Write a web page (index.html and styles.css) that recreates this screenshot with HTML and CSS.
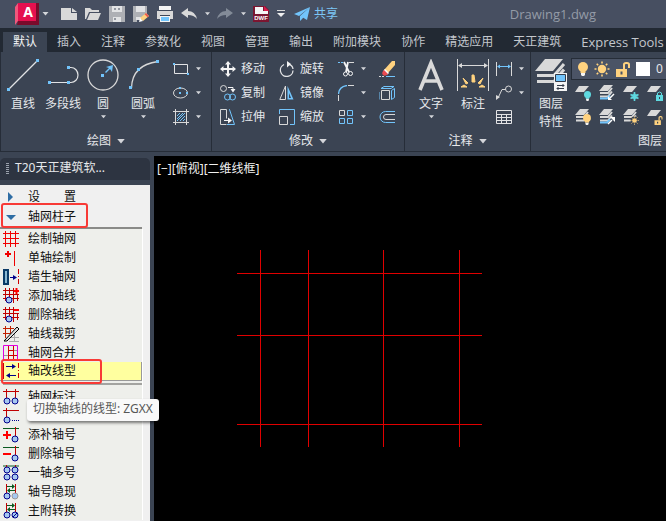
FILE: index.html
```
<!DOCTYPE html>
<html lang="zh-CN">
<head>
    <meta charset="UTF-8">
    <meta name="viewport" content="width=device-width, initial-scale=1.0">
    <title>Drawing1.dwg</title>
    <link rel="stylesheet" href="styles.css">
</head>
<body>
    <!-- shared symbols -->
    <svg class="defs" width="0" height="0" aria-hidden="true">
        <symbol id="caret" viewBox="0 0 6 4"><path d="M0 0h6L3 3.6z" fill="#d4d6da"/></symbol>
        <symbol id="sheet" viewBox="0 0 16 16"><path d="M4 2h10L9 8H0z" fill="#d9d9d9"/></symbol>
        <symbol id="stack" viewBox="0 0 16 16">
            <path d="M5 0h9L9 6H0z" fill="#d9d9d9"/>
            <path d="M1 8h8l4-5M1 11.5h8l4-5" fill="none" stroke="#d9d9d9" stroke-width="2"/>
        </symbol>
        <symbol id="bulb" viewBox="0 0 10 14">
            <circle cx="5" cy="5" r="5"/><path d="M2.5 8h5v3h-5z"/><path d="M3 11h4v2L6 14H4l-1-1z" fill="#f4f4f4"/>
        </symbol>
        <symbol id="sun" viewBox="0 0 16 16">
            <circle cx="8" cy="8" r="4.2"/>
            <path d="M8 .5v2M8 13.5v2M.5 8h2M13.5 8h2M2.7 2.7l1.5 1.5M11.8 11.8l1.5 1.5M2.7 13.3l1.5-1.5M11.8 4.2l1.5-1.5" stroke="#ffd27f" stroke-width="1.6"/>
        </symbol>
        <symbol id="unlock" viewBox="0 0 14 15">
            <path d="M0 7h11v8H0zM4.500 9.500v3h2v-3z" fill-rule="evenodd"/>
            <path d="M8 7V2.500Q8 1 10 1h1q2 0 2 1.500V6" fill="none" stroke="#ffd27f" stroke-width="2"/>
        </symbol>
        <symbol id="node" viewBox="0 0 8 8"><circle cx="4" cy="4" r="3" fill="#a6c8f0" stroke="#00008b"/></symbol>
    </svg>

    <header class="titlebar">
        <button class="app-button" aria-label="应用程序菜单">
            <svg width="24" height="22" viewBox="0 0 24 22">
                <path d="M0 4l3-4v18l-3 4z" fill="#f0587c"/><path d="M3 0h18v18H3z" fill="#e5104f"/>
                <path d="M21 0h3v22H2l1-4h18z" fill="#7a0b2b"/>
                <text class="logo-letter" x="13" y="14" text-anchor="middle">A</text>
            </svg>
            <svg width="7" height="4"><use href="#caret"/></svg>
        </button>
        <div class="quick-access">
            <button aria-label="新建"><svg width="16" height="16"><path d="M0 2h10v5h6v7H0z" fill="#d9d9d9"/><path d="M11 2l5 4h-5z" fill="#d9d9d9"/></svg></button>
            <button aria-label="打开"><svg width="16" height="16"><path d="M0 2h5l2 2h7v2H4L1 13H0z" fill="#d9d9d9"/><path d="M5 7h11l-3 7H2z" fill="#d9d9d9"/></svg></button>
            <button aria-label="保存"><svg width="16" height="16"><path d="M0 0h3v6h10V0h3v16h-4v-5H4v5H0z" fill="#aeb0b5"/><path d="M3 0h10v6H3zM4 11h8v5H4z" fill="#e2e3e5"/><path d="M6 2v2M10 2v2M6 12v2" stroke="#444c5c"/></svg></button>
            <button aria-label="另存为"><svg width="16" height="16"><path d="M0 0h3v6h9V0h2v8l-6 6H4v2H0z" fill="#aeb0b5"/><path d="M3 0h9v6H3zM3 11h5v3H3z" fill="#e2e3e5"/><path d="M7 12l6-5 3 3-6 5z" fill="#ffd27f"/><path d="M13 7l3 3-1.500 1.200-3-3z" fill="#ec5b50"/><path d="M7 12l3 3-4 1z" fill="#fff"/></svg></button>
            <button aria-label="打印"><svg width="16" height="16"><path d="M2 0h12v5H2z" fill="#f4f4f4"/><path d="M0 5h16v8h-3v-4H3v4H0z" fill="#d9d9d9"/><path d="M3 9h10v7H3z" fill="#f4f4f4"/><path d="M4 11h8v4H4z" fill="#72c4fb"/><path d="M2 4.500h12M3 9.500h10" stroke="#3f4859"/></svg></button>
            <button aria-label="放弃"><svg width="16" height="16"><path d="M0 7l7-5v3q7 0 9 8-3-4-9-4v3z" fill="#d9d9d9"/></svg></button>
            <button class="drop" aria-label="放弃列表"><svg width="5" height="4"><use href="#caret"/></svg></button>
            <button aria-label="重做"><svg width="16" height="16"><path d="M16 7L9 2v3Q2 5 0 13q3-4 9-4v3z" fill="#838b98"/></svg></button>
            <button class="drop" aria-label="重做列表"><svg width="5" height="4"><use href="#caret"/></svg></button>
            <button aria-label="DWF"><svg width="16" height="16"><path d="M0 0h12l4 4v12H0z" fill="#7b1631"/><path d="M2 1h8v4h5v3H2z" fill="#f5f5f5"/><path d="M11 0l5 5h-5z" fill="#d81b4c"/><text class="dwf-letters" x="8" y="14" text-anchor="middle">DWF</text></svg></button>
            <button class="more" aria-label="自定义"><svg width="8" height="8"><path d="M0 .5h8" stroke="#d9d9d9"/><path d="M0 3h8L4 7z" fill="#f0f0f0"/></svg></button>
        </div>
        <button class="share">
            <svg width="16" height="14"><path d="M16 0L0 7l5 2zM16 0L6 9v5l3-3z" fill="#72c4fb"/><path d="M16 0L8 10l5 3z" fill="#72c4fb"/></svg>
            共享
        </button>
        <span class="doc-title">Drawing1.dwg</span>
    </header>

    <nav class="tabs">
        <button class="tab active">默认</button>
        <button class="tab">插入</button>
        <button class="tab">注释</button>
        <button class="tab">参数化</button>
        <button class="tab">视图</button>
        <button class="tab">管理</button>
        <button class="tab">输出</button>
        <button class="tab">附加模块</button>
        <button class="tab">协作</button>
        <button class="tab">精选应用</button>
        <button class="tab">天正建筑</button>
        <button class="tab latin">Express Tools</button>
    </nav>

    <div class="ribbon">
        <section class="panel">
            <div class="panel-body draw-tools">
                <button class="big">
                    <svg width="32" height="32"><path d="M2 30L30 2" stroke="#e2e3e5" stroke-width="1.2"/><path d="M0 29h3v3H0zM29 0h3v3h-3z" fill="#72c4fb"/></svg>
                    直线
                </button>
                <button class="big">
                    <svg width="32" height="32"><path d="M3 23.500h18M22 8.500h2c4 0 7 3.500 7 7.500s-3 7.500-7 7.500h-2" fill="none" stroke="#e2e3e5" stroke-width="1.2"/><path d="M1 22h3v3H1zM20 22h3v3h-3zM20 7h3v3h-3z" fill="#72c4fb"/></svg>
                    多段线
                </button>
                <button class="big">
                    <svg width="32" height="32"><circle cx="16" cy="16" r="15" fill="none" stroke="#d9d9d9" stroke-width="1.3"/><path d="M14 15h3v3h-3zM18 13l4-4-3-1 7-2-1 7-2-3-4 4z" fill="#72c4fb"/></svg>
                    圆
                    <svg class="down" width="5" height="4"><use href="#caret"/></svg>
                </button>
                <button class="big">
                    <svg width="32" height="32"><path d="M4.500 29Q5 6 31 2.500" fill="none" stroke="#d9d9d9" stroke-width="1.3"/><path d="M2 27h3v3H2zM10 9h3v3h-3zM29 1h3v3h-3z" fill="#72c4fb"/></svg>
                    圆弧
                    <svg class="down" width="5" height="4"><use href="#caret"/></svg>
                </button>
                <div class="small-stack">
                    <button class="small" aria-label="矩形"><svg width="16" height="16"><path d="M1.500 3.500h13v9h-13z" fill="none" stroke="#e2e3e5"/><path d="M0 2h2v2H0zM14 12h2v2h-2z" fill="#72c4fb"/></svg><svg width="5" height="4"><use href="#caret"/></svg></button>
                    <button class="small" aria-label="椭圆"><svg width="16" height="16"><ellipse cx="7.500" cy="8" rx="7" ry="5" fill="none" stroke="#d9d9d9"/><path d="M6 2h2v2H6zM6 7h2v2H6zM13 7h2v2h-2z" fill="#72c4fb"/></svg><svg width="5" height="4"><use href="#caret"/></svg></button>
                    <button class="small" aria-label="图案填充"><svg width="16" height="16"><path d="M0 2.500h16M0 13.500h16M2.500 0v16M13.500 0v16" stroke="#d9d9d9"/><path d="M4 7l3-3M4 10l6-6M4 12l8-8M7 12l5-5M10 12l2-2" stroke="#72c4fb"/></svg><svg width="5" height="4"><use href="#caret"/></svg></button>
                </div>
            </div>
            <button class="panel-title">绘图<svg width="8" height="5"><use href="#caret"/></svg></button>
        </section>

        <section class="panel">
            <div class="panel-body modify-tools">
                <button class="tool"><svg width="16" height="16"><path d="M8 1v14M1 8h14" stroke="#f4f4f4" stroke-width="2"/><path d="M8 0l3 3.500H5zM8 16l3-3.500H5zM0 8l3.500-3v6zM16 8l-3.500-3v6z" fill="#f4f4f4"/></svg>移动</button>
                <button class="tool"><svg width="16" height="16"><path d="M5 3.500a6.300 6.300 0 1 0 9 6M14 8q-.5-4-5-5" fill="none" stroke="#e2e3e5" stroke-width="1.3"/><path d="M8 0l4 3-4 3.500z" fill="#f4f4f4"/></svg>旋转</button>
                <button class="small" aria-label="修剪"><svg width="16" height="16"><path d="M0 1.500h6" stroke="#72c4fb" stroke-dasharray="2 1"/><path d="M11 1.500h5" stroke="#d9d9d9"/><path d="M6 1l5 10M10 1L8 11" stroke="#f4f4f4" stroke-width="1.8"/><circle cx="7.500" cy="13" r="2" fill="none" stroke="#f4f4f4"/><circle cx="12.500" cy="12.500" r="2" fill="none" stroke="#f4f4f4"/></svg><svg width="5" height="4"><use href="#caret"/></svg></button>
                <button class="small" aria-label="删除"><svg width="16" height="16"><path d="M0 15.500h6" stroke="#d9d9d9" stroke-dasharray="2 1"/><path d="M7 15.500h9" stroke="#72c4fb"/><path d="M5 9L13 0h3v4L9 12z" fill="#ffd27f"/><path d="M6 8l4 4-1.500 1.500-4-4z" fill="#fff"/><path d="M5 9l4 4q-3 3-5 1t1-5z" fill="#ec4b50"/></svg></button>

                <button class="tool"><svg width="16" height="16"><circle cx="3.500" cy="3.500" r="3" fill="none" stroke="#d9d9d9"/><path d="M8 2.500h5V5" fill="none" stroke="#f4f4f4"/><path d="M10.500 4h5L13 7.500z" fill="#f4f4f4"/><circle cx="7.500" cy="12" r="3" fill="none" stroke="#72c4fb"/><circle cx="12.500" cy="12" r="3" fill="none" stroke="#72c4fb"/></svg>复制</button>
                <button class="tool"><svg width="16" height="16"><path d="M6.500 1v13.500H.8z" fill="none" stroke="#d9d9d9"/><path d="M8.500 1v13.500h6z" fill="#72c4fb"/><path d="M10 8v5h2z" fill="#3b4453"/></svg>镜像</button>
                <button class="small" aria-label="圆角"><svg width="16" height="16"><path d="M.5 9Q1 1.500 9 .5" fill="none" stroke="#72c4fb" stroke-width="1.3"/><path d="M10 .5h6M.5 10v6" stroke="#d9d9d9"/></svg><svg width="5" height="4"><use href="#caret"/></svg></button>
                <button class="small" aria-label="分解"><svg width="16" height="16"><path d="M2.500 5.500h8v9h-8z" fill="none" stroke="#d9d9d9"/><path d="M0 14.500V7M2 3.500L5 1.500h10L12 3.500zM12.500 5.500l3-2v9l-3 2z" fill="none" stroke="#72c4fb"/></svg></button>

                <button class="tool"><svg width="16" height="16"><path d="M6.500 15.500h-6V.5h6v9" fill="none" stroke="#d9d9d9"/><path d="M9.500.5l5 15H7M9.500.5H9" fill="none" stroke="#72c4fb"/><path d="M4 11.500h5" stroke="#f4f4f4"/><path d="M8 8.500l4 3-4 3z" fill="#f4f4f4"/></svg>拉伸</button>
                <button class="tool"><svg width="16" height="16"><path d="M.5 5V.5h15v15H11" fill="none" stroke="#72c4fb"/><path d="M.5 7.500h8v8h-8z" fill="none" stroke="#d9d9d9"/></svg>缩放</button>
                <button class="small" aria-label="阵列"><svg width="16" height="16"><path d="M1.500 1.500h5v5h-5z" fill="none" stroke="#d9d9d9"/><path d="M9.500 1.500h5v5h-5zM1.500 9.500h5v5h-5zM9.500 9.500h5v5h-5z" fill="none" stroke="#72c4fb"/></svg><svg width="5" height="4"><use href="#caret"/></svg></button>
                <button class="small" aria-label="偏移"><svg width="16" height="16"><path d="M16 2.500H6.500a5.500 5.500 0 0 0 0 11H16" fill="none" stroke="#72c4fb"/><path d="M16 5.500H7a2.500 2.500 0 0 0 0 5h9" fill="none" stroke="#d9d9d9"/></svg></button>
            </div>
            <button class="panel-title">修改<svg width="8" height="5"><use href="#caret"/></svg></button>
        </section>

        <section class="panel">
            <div class="panel-body note-tools">
                <button class="big">
                    <svg width="32" height="32"><path d="M5 31L16 4l11 27M9 22h14" fill="none" stroke="#d9d9d9" stroke-width="3.6"/></svg>
                    文字
                    <svg class="down" width="5" height="4"><use href="#caret"/></svg>
                </button>
                <button class="big">
                    <svg width="32" height="32"><path d="M.5 0v32M31.500 0v32M3 6.500h26" stroke="#d9d9d9"/><path d="M1 6.500L5 4v5zM31 6.500L27 4v5z" fill="#d9d9d9"/><path d="M4 28l6 0-3-2zM6 19l5 5-2 1zM15 16h2l1 7h-3zM26 19l-5 5 2 1zM28 28h-6l3-2z" fill="#ffd27f" stroke="#ffd27f"/></svg>
                    标注
                </button>
                <div class="small-stack">
                    <button class="small" aria-label="线性"><svg width="16" height="16"><path d="M.5 1v14M15.500 1v14" stroke="#d9d9d9"/><path d="M2 5.500h12" stroke="#72c4fb"/><path d="M1 5.500L4 3.500v4zM15 5.500l-3-2v4z" fill="#72c4fb"/></svg><svg width="5" height="4"><use href="#caret"/></svg></button>
                    <button class="small" aria-label="引线"><svg width="16" height="16"><circle cx="12.500" cy="4" r="3" fill="none" stroke="#d9d9d9"/><path d="M9.500 4.500H6L2 13" fill="none" stroke="#d9d9d9"/><path d="M0 15V10l4 2z" fill="#d9d9d9"/></svg><svg width="5" height="4"><use href="#caret"/></svg></button>
                    <button class="small" aria-label="表格"><svg width="16" height="16"><path d="M.5 1.500h15v13H.5zM0 5.500h16M0 8.500h16M0 11.500h16M5.500 5v10M10.500 5v10" fill="none" stroke="#e2e3e5"/></svg></button>
                </div>
            </div>
            <button class="panel-title">注释<svg width="8" height="5"><use href="#caret"/></svg></button>
        </section>

        <section class="panel layers">
            <div class="panel-body layer-tools">
                <button class="big">
                    <svg width="32" height="32"><path d="M10 0h18L18 12H0z" fill="#d9d9d9"/><path d="M2 16.500h17L29 5M2 22.500h17l10-12" fill="none" stroke="#d9d9d9" stroke-width="3"/><path d="M19 14h13v18H19z" fill="#f4f4f4"/><path d="M20.500 15.500h10v7h-10z" fill="#72c4fb" stroke="#333b49"/><path d="M22 26.500h7M22 29.500h7M23.500 28L22 29.500l1.500 1.500M27.500 25l1.500 1.500-1.500 1.500" fill="none" stroke="#333b49"/></svg>
                    <span>图层<br>特性</span>
                </button>
                <div class="layer-side">
                    <button class="layer-combo">
                        <svg width="10" height="14" fill="#ffd27f"><use href="#bulb"/></svg>
                        <svg width="16" height="16" fill="#ffd27f"><use href="#sun"/></svg>
                        <svg width="14" height="15" fill="#ffd27f"><use href="#unlock"/></svg>
                        <i class="swatch"></i>
                        0
                    </button>
                    <div class="layer-grid">
                        <button class="small" aria-label="关闭"><svg width="16" height="16"><use href="#sheet" y="-1"/><svg x="9" y="6" width="7" height="10" viewBox="0 0 10 14" fill="#5fd9e0"><use href="#bulb" width="10" height="14"/></svg></svg></button>
                        <button class="small" aria-label="匹配"><svg width="16" height="16"><use href="#stack"/><path d="M1 13.500h7l3-3" fill="none" stroke="#72c4fb" stroke-width="2"/><path d="M15 9l-4 4" stroke="#fff" stroke-width="1.5"/><path d="M9 15v-4l4 4z" fill="#fff"/></svg></button>
                        <button class="small" aria-label="冻结"><svg width="16" height="16"><use href="#sheet" y="-1"/><path d="M11.500 7v9M7.500 9.500l8 4M15.500 9.500l-8 4" stroke="#5fd9e0" stroke-width="1.6"/><circle cx="11.500" cy="11.500" r="2.500" fill="none" stroke="#5fd9e0"/></svg></button>
                        <button class="small" aria-label="锁定"><svg width="16" height="16"><use href="#sheet" y="-1"/><path d="M9 10h7v6H9z" fill="#5fd9e0"/><path d="M10.500 10V8q2-2 4 0v2" fill="none" stroke="#5fd9e0"/><path d="M12 12h1v2h-1z" fill="#3b4453"/></svg></button>
                        <button class="small" aria-label="全部打开"><svg width="16" height="16"><use href="#stack"/><svg x="8" y="5" width="8" height="11" viewBox="0 0 10 14" fill="#ffd27f"><use href="#bulb" width="10" height="14"/></svg></svg></button>
                        <button class="small" aria-label="置为当前"><svg width="16" height="16"><use href="#stack"/><path d="M1 13.500h7l3-3" fill="none" stroke="#72c4fb" stroke-width="2"/><path d="M9 15l4-4" stroke="#fff" stroke-width="1.5"/><path d="M16 8v5l-5-5z" fill="#fff"/></svg></button>
                        <button class="small" aria-label="解冻"><svg width="16" height="16"><use href="#stack"/><circle cx="11.500" cy="11.500" r="4" fill="#3b4453"/><svg x="7" y="7" width="9" height="9" viewBox="0 0 16 16" fill="#ffd27f"><use href="#sun" width="16" height="16"/></svg></svg></button>
                        <button class="small" aria-label="解锁"><svg width="16" height="16"><use href="#sheet" y="-1"/><svg x="7" y="7" width="9" height="9" viewBox="0 0 14 15" fill="#ffd27f"><use href="#unlock" width="14" height="15"/></svg></svg></button>
                    </div>
                </div>
            </div>
            <button class="panel-title">图层</button>
        </section>
    </div>

    <main class="workspace">
        <aside class="palette">
            <h1 class="palette-title"><i class="grip"></i>T20天正建筑软...</h1>
            <div class="menu">
                <button class="group"><svg width="16" height="16"><path d="M5 3l5 5-5 5z" fill="#2e6da4"/></svg>设　　置</button>
                <button class="group open marked"><svg width="16" height="16"><path d="M3 6h10l-5 5z" fill="#2e6da4"/></svg>轴网柱子</button>
                <div class="items">
                    <button class="item"><svg width="16" height="16"><path d="M0 2.500h16M0 7.500h16M0 12.500h16M2.500 0v16M7.500 0v16M12.500 0v16" stroke="#f00000"/></svg>绘制轴网</button>
                    <button class="item"><svg width="16" height="16"><path d="M2 4h6M5 1v6" stroke="#f00000" stroke-width="2"/><path d="M11.500 1v15" stroke="#f00000"/></svg>单轴绘制</button>
                    <button class="item"><svg width="16" height="16"><path d="M1 1h4v14H1z" fill="#8ab8d0" stroke="#0a3a66" stroke-width="2"/><path d="M7 8.500h5" stroke="#00008b"/><path d="M10 6l4 2.500-4 2.500z" fill="#00008b"/><path d="M15.500 0v16" stroke="#c00" stroke-dasharray="5 2 1 2"/></svg>墙生轴网</button>
                    <button class="item"><svg width="16" height="16"><path d="M0 2.500h11M0 6.500h16M0 10.500h16M2.500 0v13M6.500 0v11M10.500 0v15M14.500 6v7" stroke="#c00000"/><path d="M11 3h5M13.500 0v6" stroke="#f00" stroke-width="2"/><use href="#node" x="2" y="8" width="8" height="8"/></svg>添加轴线</button>
                    <button class="item"><svg width="16" height="16"><path d="M0 2.500h10M0 6.500h16M0 10.500h16M2.500 0v13M6.500 0v11M10.500 0v15M14.500 6v7" stroke="#c00000"/><path d="M11 3h5" stroke="#f00" stroke-width="2"/><use href="#node" x="2" y="8" width="8" height="8"/></svg>删除轴线</button>
                    <button class="item"><svg width="16" height="16"><path d="M0 2.500h11M0 7.500h8M2.500 0v12M7.500 0v8" stroke="#c02000"/><path d="M8 11.500h8M11.500 7v9M6 15.500h10" stroke="#aaa"/><path d="M1 15L14 1l2 2L4 15z" fill="#ddd" stroke="#000"/></svg>轴线裁剪</button>
                    <button class="item"><svg width="16" height="16"><path d="M5 5.500h10M5 10.500h10M5.500 1v14M10.500 1v14" stroke="#d00000"/><path d="M11 5.500h3M1 10.500h4" stroke="#999"/><path d="M.5.500h14v15H.5z" fill="none" stroke="#e000e0"/></svg>轴网合并</button>
                    <button class="item current marked"><svg width="16" height="16"><path d="M.5 0v16" stroke="#c00"/><path d="M15.500 0v16" stroke="#c00" stroke-dasharray="5 2 1 2"/><path d="M3 3.500h7M6 12.500h7" stroke="#00008b"/><path d="M9 1l4 2.500L9 6zM7 10l-4 2.500L7 15z" fill="#00008b"/></svg>轴改线型</button>
                    <hr>
                    <button class="item"><svg width="16" height="16"><path d="M0 2.500h16M3.500 0v10M12.500 0v10" stroke="#c00000"/><use href="#node" x="0" y="8" width="8" height="8"/><use href="#node" x="8" y="8" width="8" height="8"/></svg>轴网标注</button>
                    <button class="item" aria-label="单轴标注"><svg width="16" height="16"><path d="M0 2.500h16M3.500 0v10" stroke="#c00000"/><path d="M9 12.500h7" stroke="#00008b" stroke-dasharray="1 1"/><use href="#node" x="0" y="8" width="8" height="8"/></svg></button>
                    <button class="item"><svg width="16" height="16"><path d="M0 1.500h16" stroke="#0a5a20"/><path d="M12.500 0v10" stroke="#c00000"/><path d="M0 8h8M4 4v8" stroke="#f00" stroke-width="2"/><use href="#node" x="8" y="8" width="8" height="8"/></svg>添补轴号</button>
                    <button class="item"><svg width="16" height="16"><path d="M0 1.500h16" stroke="#0a5a20"/><path d="M12.500 0v10" stroke="#c00000"/><path d="M0 8h8" stroke="#f00" stroke-width="2"/><use href="#node" x="8" y="8" width="8" height="8"/></svg>删除轴号</button>
                    <button class="item"><svg width="16" height="16"><path d="M0 1h16" stroke="#0a5a20"/><path d="M3.500 0v3M12.500 0v3" stroke="#c00000"/><use href="#node" x="0" y="1" width="8" height="8"/><use href="#node" x="8" y="1" width="8" height="8"/><use href="#node" x="0" y="8" width="8" height="8"/><use href="#node" x="8" y="8" width="8" height="8"/></svg>一轴多号</button>
                    <button class="item"><svg width="16" height="16"><path d="M3.500 0v10M12.500 0v10" stroke="#c00000"/><path d="M4 2.500h7M5 6.500h7" stroke="#0a5a20"/><path d="M9 0l3 2.500L9 5zM7 4L4 6.500 7 9z" fill="#0a5a20"/><use href="#node" x="0" y="8" width="8" height="8"/><circle cx="12" cy="12" r="3" fill="#a6c8f0" stroke="#999"/></svg>轴号隐现</button>
                    <button class="item"><svg width="16" height="16"><path d="M3.500 0v10M12.500 0v10" stroke="#c00000"/><path d="M4 2.500h7M5 6.500h7" stroke="#0a5a20"/><path d="M9 0l3 2.500L9 5zM7 4L4 6.500 7 9z" fill="#0a5a20"/><use href="#node" x="0" y="8" width="8" height="8"/><use href="#node" x="8" y="8" width="8" height="8"/><path d="M10 14l4-4" stroke="#00008b"/></svg>主附转换</button>
                </div>
            </div>
            <div class="tooltip" role="tooltip">切换轴线的线型: ZGXX</div>
        </aside>
        <section class="viewport">
            <div class="view-label">[−][俯视][二维线框]</div>
            <svg class="axis-grid" width="245" height="197">
                <path d="M23 0h1v197h-1zM71 0h1v197h-1zM146 0h1v197h-1zM222 0h1v197h-1zM0 23h245v1H0zM0 85h245v1H0zM0 174h245v1H0z" fill="#e00000"/>
            </svg>
        </section>
    </main>
</body>
</html>
```
FILE: styles.css
```
*,
*::after {
    box-sizing: border-box;
}
body {
    margin: 0;
    height: 100vh;
    display: flex;
    flex-direction: column;
    overflow: hidden;
    background: #3b4453;
    color: #e6e8eb;
    font-family: "Noto Sans", "Noto Sans CJK SC", sans-serif;
    font-size: 12px;
    line-height: 18px;
}
button {
    margin: 0;
    padding: 0;
    border: 0;
    background: none;
    color: inherit;
    font: inherit;
    white-space: nowrap;
}
svg {
    display: block;
    flex: none;
}
.defs {
    position: absolute;
}

/* title bar */
.titlebar {
    display: flex;
    align-items: center;
    height: 28px;
    flex: none;
    padding-left: 15px;
    background: #474f61;
}
.app-button {
    display: flex;
    align-items: center;
    gap: 3px;
    margin-right: 12px;
}
.app-button svg {
    overflow: visible;
}
.logo-letter {
    font: bold 14px "Open Sans", sans-serif;
    fill: #fff;
}
.dwf-letters {
    font: bold 6px "Liberation Sans", sans-serif;
    fill: #fff;
}
.quick-access {
    display: flex;
    align-items: center;
    gap: 8px;
}
.quick-access .drop {
    width: 4px;
}
.share {
    display: flex;
    align-items: center;
    gap: 4px;
    margin-left: 9px;
    color: #7cc6f6;
}
.doc-title {
    margin-left: auto;
    padding-right: 70px;
    font-family: "Open Sans", sans-serif;
    font-size: 13px;
    color: #949ba7;
}

/* tabs */
.tabs {
    display: flex;
    align-items: flex-end;
    height: 24px;
    flex: none;
    padding-left: 3px;
    background: #222933;
}
.tab {
    height: 20px;
    padding: 0 10px;
    color: #c3c7cd;
}
.tab.latin {
    padding-right: 0;
    font-family: "Open Sans", sans-serif;
    font-size: 13px;
}
.tab.active {
    background: #3b4453;
    color: #f2f3f5;
}

/* ribbon */
.ribbon {
    display: flex;
    height: 100px;
    flex: none;
    border-left: 1px solid #262d38;
    border-bottom: 1px solid #262d38;
}
.panel {
    display: flex;
    flex-direction: column;
    justify-content: space-between;
    border-right: 1px solid #262d38;
}
.panel-body {
    display: flex;
    padding-top: 5px;
}
.panel-title {
    display: flex;
    align-items: center;
    justify-content: center;
    gap: 6px;
    height: 20px;
}
.big {
    display: flex;
    flex-direction: column;
    align-items: center;
    width: 40px;
    padding-top: 2px;
}
.big > svg:first-child {
    margin-bottom: 4px;
}
.small-stack {
    display: flex;
    flex-direction: column;
}
.small {
    display: flex;
    align-items: center;
    gap: 7px;
    height: 24px;
}
.tool {
    display: flex;
    align-items: center;
    gap: 5px;
    height: 24px;
}
.down {
    margin-top: 2px;
}
.draw-tools {
    padding-left: 2px;
    padding-right: 10px;
}
.draw-tools .small-stack {
    margin-left: 10px;
}
.modify-tools {
    display: grid;
    grid-template-columns: 59px 59px 41px 25px;
    padding-left: 8px;
}
.note-tools {
    padding-left: 5px;
    padding-right: 6px;
}
.note-tools .big {
    width: 42px;
}
.note-tools .small-stack {
    margin-left: 2px;
}
.layers {
    flex: 1;
    min-width: 0;
    border-right: 0;
}
.layers .big {
    flex: none;
}
.layers .panel-title {
    align-self: flex-end;
    padding-right: 4px;
}
.layer-side {
    flex: 1;
    min-width: 0;
    padding-top: 1px;
}
.layer-combo {
    display: flex;
    align-items: center;
    gap: 6px;
    width: 100%;
    height: 22px;
    padding-left: 6px;
    border: 1px solid #262d38;
    border-right: 0;
    background: #4b5466;
}
.swatch {
    width: 14px;
    height: 14px;
    background: #fff;
}
.layer-grid {
    display: grid;
    grid-template-columns: repeat(4, 24px);
    padding: 1px 0 0 4px;
}

/* workspace */
.workspace {
    display: flex;
    flex: 1;
    min-height: 0;
    padding-top: 4px;
}
.palette {
    position: relative;
    display: flex;
    flex-direction: column;
    width: 150px;
    flex: none;
    margin-right: 4px;
    padding-top: 2px;
    color: #111;
}
.palette-title {
    display: flex;
    align-items: center;
    gap: 6px;
    height: 27px;
    flex: none;
    margin: 0;
    padding: 0 0 2px 6px;
    border-bottom: 5px solid #3b4453;
    border-radius: 5px 5px 0 0;
    background: #2d3441;
    color: #e6e8eb;
    font-size: 12px;
    font-weight: normal;
}
.grip {
    width: 3px;
    height: 11px;
    background: repeating-linear-gradient(#9aa1ac 0 1px, transparent 1px 2px);
}
.menu {
    flex: 1;
    padding-top: 2px;
    background: #f0f0f0;
}
.group,
.item {
    position: relative;
    display: flex;
    align-items: center;
    gap: 9px;
    width: 142px;
    height: 19px;
    padding-left: 3px;
}
.group.open {
    height: 23px;
    border-bottom: 2px solid #8a8a88;
}
.items {
    width: 143px;
    border-right: 1px solid #fff;
    background: #eeefeb;
}
.item.current {
    background: #ffff9f;
    border-right: 1px solid #999;
    border-bottom: 1px solid #999;
}
.items hr {
    height: 2px;
    margin: 2px 0 2px 3px;
    border: 0;
    background: #a3a3a0;
}
.marked::after {
    content: "";
    position: absolute;
    top: -3px;
    left: 1px;
    width: 101px;
    height: 25px;
    border: 2px solid #f83a36;
    border-radius: 3px;
}
.group.marked::after {
    width: 87px;
}
.tooltip {
    position: absolute;
    top: 243px;
    left: 27px;
    padding: 1px 6px 3px;
    border-radius: 3px;
    background: #f9f9f9;
    box-shadow: 1px 2px 3px rgba(0, 0, 0, 0.5);
    color: #575757;
    white-space: nowrap;
}
.viewport {
    flex: 1;
    background: #000;
}
.view-label {
    padding: 4px 3px;
    color: #f0f0f0;
}
.axis-grid {
    margin: 68px 0 0 83px;
}
```
